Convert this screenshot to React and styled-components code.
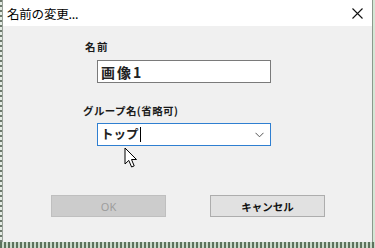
import React from "react";
import styled, { createGlobalStyle } from "styled-components";

const Global = createGlobalStyle`
  html, body { margin: 0; padding: 0; background: #fff; }
  body { font-family: "Noto Sans CJK JP", "Noto Sans", sans-serif; }
`;

const Page = styled.div`
  width: 375px;
  height: 248px;
  display: grid;
  grid-template-columns: 3px 369px 3px;
  grid-template-rows: 242px 6px;
  background:
    repeating-linear-gradient(90deg, #5d735d 0 2px, #c9d9c9 2px 4px);
  overflow: hidden;
`;

const LeftEdge = styled.div`
  background: repeating-linear-gradient(180deg, #6d7a6d 0 2px, #e4ebe4 2px 5px);
  border-right: 1px solid #9aa29a;
  box-sizing: border-box;
`;

const RightEdge = styled.div`
  background: #d5e6d5;
  border-left: 1px solid #8c9a8c;
  box-sizing: border-box;
`;

const Dialog = styled.div`
  display: flex;
  flex-direction: column;
  background: #f0f0f0;
  box-sizing: border-box;
`;

const TitleBar = styled.div`
  height: 26px;
  background: #ffffff;
  display: flex;
  align-items: center;
  justify-content: space-between;
  padding: 0 9px 0 4px;
`;

const Title = styled.span`
  font-size: 12.5px;
  color: #000;
  letter-spacing: -0.2px;
`;

const Close = styled.svg`
  width: 11px;
  height: 11px;
`;

const Body = styled.div`
  flex: 1;
  display: flex;
  flex-direction: column;
  padding: 14px 0 0 80px;
`;

const Label = styled.div`
  font-size: 10.5px;
  font-weight: 700;
  color: #1a1a1a;
  letter-spacing: ${(p) => p.$spacing || "0.3px"};
  line-height: 14px;
  margin: ${(p) => p.$margin || "0"};
`;

const Field = styled.div`
  margin: ${(p) => p.$margin};
  width: 174px;
  height: ${(p) => p.$h};
  box-sizing: border-box;
  border: 1px solid ${(p) => (p.$focus ? "#2f7fd1" : "#7a7a7a")};
  background: #fff;
  display: flex;
  align-items: center;
  padding: 0 6px 0 3px;
  position: relative;
`;

const FieldText = styled.span`
  font-size: ${(p) => p.$size};
  font-weight: 700;
  color: #222;
  letter-spacing: ${(p) => p.$spacing || "0"};
  line-height: 1;
`;

const Caret = styled.span`
  display: inline-block;
  width: 1px;
  height: 15px;
  background: #000;
  margin-left: 1px;
`;

const Chevron = styled.svg`
  margin-left: auto;
  width: 9px;
  height: 6px;
`;

const Cursor = styled.svg`
  position: absolute;
  left: 26px;
  top: 23px;
  width: 14px;
  height: 22px;
`;

const Buttons = styled.div`
  display: flex;
  gap: 44px;
  margin: 49px 0 0 -32px;
`;

const Button = styled.div`
  width: 115px;
  height: 22px;
  box-sizing: border-box;
  border: 1px solid ${(p) => (p.$disabled ? "#bfbfbf" : "#adadad")};
  background: ${(p) => (p.$disabled ? "#cccccc" : "#e1e1e1")};
  color: ${(p) => (p.$disabled ? "#9d9d9d" : "#111")};
  font-size: ${(p) => (p.$disabled ? "11px" : "10.5px")};
  font-weight: ${(p) => (p.$disabled ? 400 : 700)};
  font-family: ${(p) =>
    p.$disabled ? '"Noto Sans", sans-serif' : '"Noto Sans CJK JP", sans-serif'};
  display: flex;
  align-items: center;
  justify-content: center;
`;

export default function App() {
  return (
    <>
      <Global />
      <Page>
        <LeftEdge />
        <Dialog>
          <TitleBar>
            <Title>名前の変更...</Title>
            <Close viewBox="0 0 11 11">
              <path d="M0.5 0.5 L10.5 10.5 M10.5 0.5 L0.5 10.5" stroke="#111" strokeWidth="1.1" fill="none" />
            </Close>
          </TitleBar>
          <Body>
            <Label $margin="0 0 0 2px" $spacing="1.5px">名前</Label>
            <Field $margin="6px 0 0 14px" $h="23px">
              <FieldText $size="14px" $spacing="2px">画像1</FieldText>
            </Field>
            <Label $margin="21px 0 0 0" $spacing="0.4px">グループ名(省略可)</Label>
            <Field $margin="5px 0 0 14px" $h="23px" $focus>
              <FieldText $size="12.5px">トップ</FieldText>
              <Caret />
              <Chevron viewBox="0 0 9 6">
                <path d="M0.5 0.8 L4.5 4.8 L8.5 0.8" stroke="#555" strokeWidth="1" fill="none" />
              </Chevron>
              <Cursor viewBox="0 0 14 22">
                <path
                  d="M1 1 L1 17 L4.8 13.4 L7.6 20 L10.2 18.9 L7.5 12.5 L12.5 12.5 Z"
                  fill="#fff"
                  stroke="#000"
                  strokeWidth="1"
                  strokeLinejoin="miter"
                />
              </Cursor>
            </Field>
            <Buttons>
              <Button $disabled>OK</Button>
              <Button>キャンセル</Button>
            </Buttons>
          </Body>
        </Dialog>
        <RightEdge />
      </Page>
    </>
  );
}
